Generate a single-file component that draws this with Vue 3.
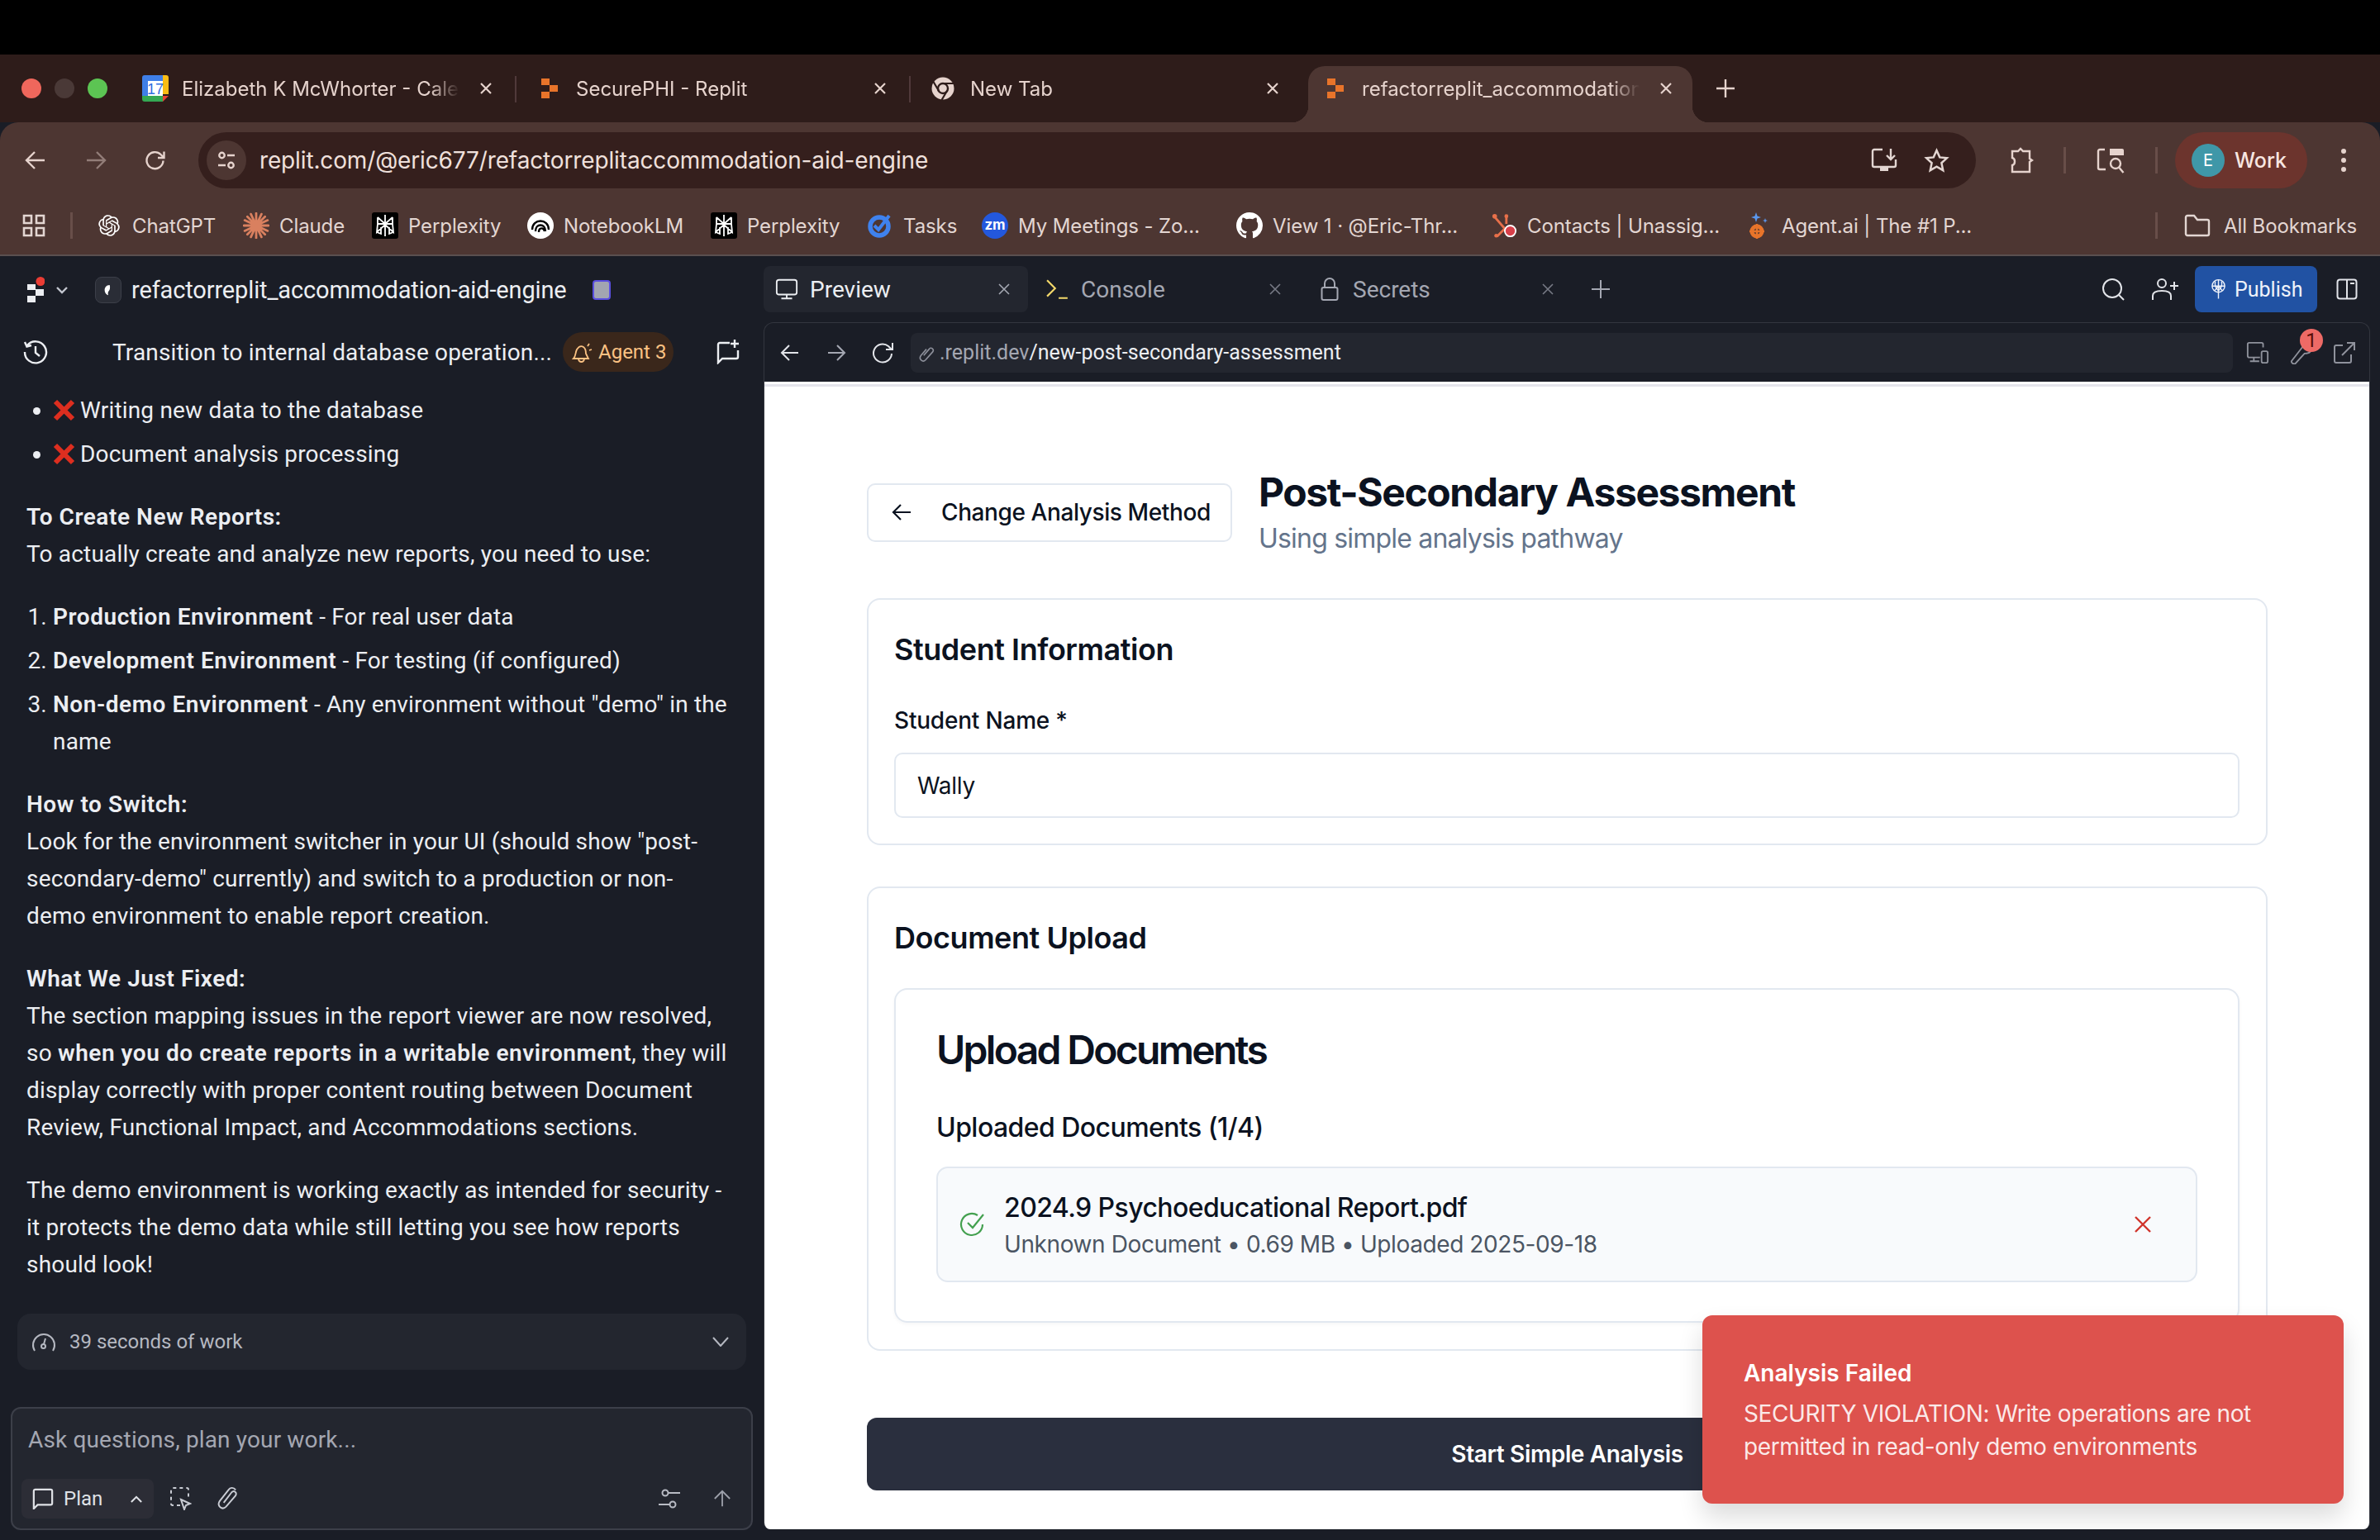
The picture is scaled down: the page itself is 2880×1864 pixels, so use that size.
<script setup>
const bookmarks = [
  { icon: 'gpt', label: 'ChatGPT', w: 178 },
  { icon: 'claude', label: 'Claude', w: 156 },
  { icon: 'perplexity', label: 'Perplexity', w: 188 },
  { icon: 'notebook', label: 'NotebookLM', w: 222 },
  { icon: 'perplexity', label: 'Perplexity', w: 189 },
  { icon: 'tasks', label: 'Tasks', w: 139 },
  { icon: 'zoom', label: 'My Meetings - Zo...', w: 308 },
  { icon: 'github', label: 'View 1 · @Eric-Thr...', w: 308 },
  { icon: 'hubspot', label: 'Contacts | Unassig...', w: 308 },
  { icon: 'agent', label: 'Agent.ai | The #1 P...', w: 496 }
]
</script>

<template>
  <div class="screen">
    <div class="notch"></div>

    <div class="tabstrip">
      <div class="lights">
        <i class="dot red"></i><i class="dot grey"></i><i class="dot green"></i>
      </div>
      <div class="tab">
        <svg class="fav" viewBox="0 0 32 32"><path fill="#fff" d="M7 7h18v18H7z"/><path fill="#3f7fe8" d="M3 0h23v7H7v18H0V3a3 3 0 0 1 3-3z"/><path fill="#f9bc15" d="M25 0h4a3 3 0 0 1 3 3v20h-7z"/><path fill="#34a853" d="M0 25h25v7H3a3 3 0 0 1-3-3z"/><path fill="#ea4335" d="M25 25h7l-7 7z"/><text x="16" y="23" text-anchor="middle" class="cal-num">17</text></svg>
        <span class="tab-title">Elizabeth K McWhorter - Cale</span>
        <svg class="tab-x" viewBox="0 0 16 16"><path d="M2 2l12 12M14 2L2 14"/></svg>
      </div>
      <div class="tab">
        <svg class="fav" viewBox="0 0 32 32"><path fill="#e8742a" d="M6 4h10v8H6zM16 12h10v8H16zM6 20h10v8H6z"/></svg>
        <span class="tab-title">SecurePHI - Replit</span>
        <svg class="tab-x" viewBox="0 0 16 16"><path d="M2 2l12 12M14 2L2 14"/></svg>
      </div>
      <div class="tab last">
        <svg class="fav" viewBox="0 0 32 32"><circle cx="15" cy="16" r="13.5" fill="#e6d3cd"/><circle cx="15" cy="16" r="6" fill="#e6d3cd" stroke="#2e1c1a" stroke-width="2.4"/><path d="M15 10h13M20 19l-6.5 11M10 19L3.5 8" stroke="#2e1c1a" stroke-width="2.2" fill="none"/></svg>
        <span class="tab-title">New Tab</span>
        <svg class="tab-x" viewBox="0 0 16 16"><path d="M2 2l12 12M14 2L2 14"/></svg>
      </div>
      <div class="tab active">
        <svg class="fav" viewBox="0 0 32 32"><path fill="#e8742a" d="M6 4h10v8H6zM16 12h10v8H16zM6 20h10v8H6z"/></svg>
        <span class="tab-title">refactorreplit_accommodation</span>
        <svg class="tab-x" viewBox="0 0 16 16"><path d="M2 2l12 12M14 2L2 14"/></svg>
      </div>
      <svg class="new-tab" viewBox="0 0 22 22"><path d="M11 0v22M0 11h22"/></svg>
    </div>

    <div class="toolbar">
      <svg class="nav-ic back" viewBox="0 0 26 26"><path d="M24 13H2M12 3L2 13l10 10"/></svg>
      <svg class="nav-ic fwd" viewBox="0 0 26 26"><path d="M2 13h22M14 3l10 10-10 10"/></svg>
      <svg class="nav-ic reload" viewBox="0 0 26 26"><path d="M22.5 13.5a10 10 0 1 1-3-7.5l3.5 3.5M23.5 2.5v7.5H16"/></svg>
      <div class="omnibox">
        <div class="site-chip">
          <svg viewBox="0 0 24 24"><circle cx="6.5" cy="6" r="3.2"/><path d="M13 6h9M2 18h9"/><circle cx="17.5" cy="18" r="3.2"/></svg>
        </div>
        <span class="url">replit.com/@eric677/refactorreplitaccommodation-aid-engine</span>
        <svg class="omni-ic install" viewBox="0 0 32 30"><path d="M14 2H4a2 2 0 0 0-2 2v17a2 2 0 0 0 2 2h24a2 2 0 0 0 2-2v-7"/><path d="M24 1v13M19 9l5 5 5-5"/><path class="solid" d="M11 23h10v5H11z"/></svg>
        <svg class="omni-ic star" viewBox="0 0 30 30"><path d="M15 3l3.6 8 8.4.9-6.3 5.8 1.8 8.6-7.5-4.4-7.5 4.4 1.8-8.6L3 11.900l8.400-.9z"/></svg>
      </div>
      <svg class="nav-ic puzzle" viewBox="0 0 32 32"><path d="M6 5h7l3-3 3 3h8v9l3 2-3 2v12H6v-8c4-1 4-8 0-9z"/></svg>
      <i class="bar"></i>
      <svg class="nav-ic lens" viewBox="0 0 36 32"><path d="M11 3H5a2 2 0 0 0-2 2v20a2 2 0 0 0 2 2h7"/><path class="solid" d="M17 2h15a2 2 0 0 1 2 2v6H17z"/><circle cx="24" cy="20" r="6"/><path d="M28.500 25l5 6"/></svg>
      <i class="bar"></i>
      <div class="profile">
        <span class="avatar">E</span>
        <span>Work</span>
      </div>
      <div class="kebab"><i></i><i></i><i></i></div>
    </div>

    <div class="bookmarks">
      <svg class="grid-ic" viewBox="0 0 28 28"><path d="M2 2h9v9H2zM17 2h9v9h-9zM2 17h9v9H2zM17 17h9v9h-9z"/></svg>
      <i class="bm-bar"></i>
      <div v-for="(b, i) in bookmarks" :key="i" class="bm" :style="{ width: b.w + 'px' }">
        <svg v-if="b.icon === 'gpt'" class="bm-ic" viewBox="-3 -3 30 30"><path fill="#fff" d="M22.282 9.821a5.985 5.985 0 0 0-.516-4.91 6.046 6.046 0 0 0-6.51-2.9A6.065 6.065 0 0 0 4.981 4.18a5.985 5.985 0 0 0-3.998 2.9 6.046 6.046 0 0 0 .743 7.097 5.98 5.98 0 0 0 .51 4.911 6.051 6.051 0 0 0 6.515 2.9A5.985 5.985 0 0 0 13.26 24a6.056 6.056 0 0 0 5.772-4.206 5.99 5.99 0 0 0 3.997-2.9 6.056 6.056 0 0 0-.747-7.073zM13.26 22.43a4.476 4.476 0 0 1-2.876-1.04l.141-.081 4.779-2.758a.795.795 0 0 0 .392-.681v-6.737l2.02 1.168a.071.071 0 0 1 .038.052v5.583a4.504 4.504 0 0 1-4.494 4.494zM3.6 18.304a4.47 4.47 0 0 1-.535-3.014l.142.085 4.783 2.759a.771.771 0 0 0 .78 0l5.843-3.369v2.332a.08.08 0 0 1-.033.062L9.74 19.95a4.5 4.5 0 0 1-6.14-1.646zM2.34 7.896a4.485 4.485 0 0 1 2.366-1.973V11.6a.766.766 0 0 0 .388.676l5.815 3.355-2.02 1.168a.076.076 0 0 1-.071 0l-4.83-2.786A4.504 4.504 0 0 1 2.34 7.872zm16.597 3.855l-5.833-3.387L15.119 7.2a.076.076 0 0 1 .071 0l4.83 2.791a4.494 4.494 0 0 1-.676 8.105v-5.678a.79.79 0 0 0-.407-.667zm2.01-3.023l-.141-.085-4.774-2.782a.776.776 0 0 0-.785 0L9.409 9.23V6.897a.066.066 0 0 1 .028-.061l4.83-2.787a4.5 4.5 0 0 1 6.68 4.66zm-12.64 4.135l-2.02-1.164a.08.08 0 0 1-.038-.057V6.075a4.5 4.5 0 0 1 7.375-3.453l-.142.08L8.704 5.460a.795.795 0 0 0-.393.681zm1.097-2.365l2.602-1.5 2.607 1.5v2.999l-2.597 1.5-2.607-1.500z"/></svg>
        <svg v-else-if="b.icon === 'claude'" class="bm-ic" viewBox="0 0 30 30"><path stroke="#d9805f" stroke-width="2.600" stroke-linecap="round" d="M15 1v28M1 15h28M5 5l20 20M25 5L5 25M9 2l12 26M21 2L9 28M2 9l26 12M28 9L2 21"/></svg>
        <svg v-else-if="b.icon === 'perplexity'" class="bm-ic" viewBox="0 0 32 32"><rect width="32" height="32" rx="3" fill="#000"/><path fill="none" stroke="#fff" stroke-width="1.800" d="M16 3v26M7 6l9 8 9-8M7 6v8h18V6M7 14l-1 10 10-9 10 9-1-10M6 24l5 2v-8M26 24l-5 2v-8"/></svg>
        <svg v-else-if="b.icon === 'notebook'" class="bm-ic" viewBox="0 0 32 32"><circle cx="16" cy="16" r="16" fill="#fff"/><path fill="none" stroke="#000" stroke-width="2.400" d="M6 21c0-14 20-14 20 0M10 23c0-10 12-10 12 0M14 24c0-6 6-6 7-1"/></svg>
        <svg v-else-if="b.icon === 'tasks'" class="bm-ic" viewBox="0 0 30 32"><circle cx="14" cy="17" r="11" fill="none" stroke="#3f82ee" stroke-width="5.500"/><path fill="none" stroke="#3f82ee" stroke-width="4" d="M8 16l5 5L26 4"/></svg>
        <svg v-else-if="b.icon === 'zoom'" class="bm-ic" viewBox="0 0 32 32"><rect width="32" height="32" rx="16" fill="#2358dd"/><text x="16" y="21" text-anchor="middle" class="zm">zm</text></svg>
        <svg v-else-if="b.icon === 'github'" class="bm-ic" viewBox="0 0 16 16"><path fill="#fff" d="M8 0C3.58 0 0 3.58 0 8c0 3.540 2.290 6.530 5.470 7.590.4.070.55-.17.55-.38 0-.19-.01-.82-.01-1.490-2.010.37-2.530-.49-2.690-.94-.09-.23-.48-.94-.82-1.130-.28-.15-.68-.52-.01-.53.63-.01 1.080.58 1.230.82.72 1.210 1.870.87 2.330.66.070-.52.28-.87.51-1.070-1.780-.2-3.640-.89-3.640-3.950 0-.87.31-1.590.82-2.150-.08-.2-.36-1.020.08-2.120 0 0 .67-.21 2.200.82.64-.18 1.320-.27 2-.27s1.360.09 2 .27c1.530-1.040 2.200-.82 2.200-.82.44 1.100.16 1.920.08 2.120.51.56.82 1.270.82 2.150 0 3.070-1.870 3.750-3.650 3.950.29.25.54.73.54 1.480 0 1.070-.01 1.930-.01 2.200 0 .21.15.46.55.38A8.013 8.013 0 0 0 16 8c0-4.420-3.580-8-8-8z"/></svg>
        <svg v-else-if="b.icon === 'hubspot'" class="bm-ic" viewBox="0 0 34 32"><path fill="none" stroke="#e8704a" stroke-width="3" d="M5 5l13 15M20 3v11M18 20L8 30"/><circle cx="5" cy="4" r="3" fill="#e8704a"/><circle cx="20" cy="4" r="2.500" fill="#e8704a"/><circle cx="7" cy="29" r="2.500" fill="#e8704a"/><circle cx="25" cy="23" r="7" fill="#d8404a" stroke="#fff" stroke-width="2"/></svg>
        <svg v-else class="bm-ic" viewBox="0 0 24 32"><path fill="#5a97ee" d="M9 0l1.500 4.500L15 6l-4.500 1.500L9 12l-1.500-4.500L3 6l4.500-1.500zM20 7l.8 2.200 2.200.8-2.200.8L20 13l-.8-2.200L17 10l2.200-.8z"/><circle cx="10" cy="23" r="6" fill="none" stroke="#e8742a" stroke-width="5"/><path stroke="#e8742a" stroke-width="2.500" d="M10 14v18M1 23h18"/></svg>
        <span class="bm-label">{{ b.label }}</span>
      </div>
      <i class="bm-bar end"></i>
      <svg class="bm-folder" viewBox="0 0 32 28"><path d="M2 4a2 2 0 0 1 2-2h8l4 5h12a2 2 0 0 1 2 2v15a2 2 0 0 1-2 2H4a2 2 0 0 1-2-2z"/></svg>
      <span class="bm-label">All Bookmarks</span>
    </div>

    <div class="workspace">
      <aside class="agent">
        <div class="project-row">
          <svg class="replit-logo" viewBox="0 0 21 32"><path fill="#eceef2" d="M0 9h10v7H0zM10 15h10v8H10zM0 23h10v8H0z"/><circle cx="16" cy="5.500" r="5.500" fill="#ea3c34"/></svg>
          <svg class="chev" viewBox="0 0 14 10"><path d="M1 2l6 6 6-6"/></svg>
          <span class="project-ic"><svg viewBox="0 0 16 20"><path fill="#fff" d="M10 3C5 3 3 7 3 10c0 4 3 7 5 7-1-3 0-5 1-6s2-4 1-8z"/></svg></span>
          <span class="project-name">refactorreplit_accommodation-aid-engine</span>
          <span class="stop-ic"></span>
        </div>

        <div class="chat-row">
          <svg class="line-ic history" viewBox="0 0 30 30"><path d="M5 7a13 13 0 1 1-3 8M2 3l2.500 5.500L10 7M15 8v8l5 4"/></svg>
          <span class="chat-title">Transition to internal database operation...</span>
          <span class="agent-badge">
            <svg viewBox="0 0 26 26"><path d="M3 21c3-3 2-7 4-11 2-3 5-5 8-3 3 2 3 5 3 8l3 6zM9 22c1 4 6 4 7 0M20 6l2-3M22 11l3-1"/></svg>
            Agent 3
          </span>
          <svg class="line-ic new-chat" viewBox="0 0 28 30"><path d="M16 4H4a2 2 0 0 0-2 2v22l5-5h17a2 2 0 0 0 2-2V13M22 0v10M17 5h10"/></svg>
        </div>

        <div class="thread">
          <ul>
            <li><svg class="cross" viewBox="0 0 27 27"><path d="M3 3l21 21M24 3L3 24"/></svg>Writing new data to the database</li>
            <li><svg class="cross" viewBox="0 0 27 27"><path d="M3 3l21 21M24 3L3 24"/></svg>Document analysis processing</li>
          </ul>
          <p><strong>To Create New Reports:</strong><br>To actually create and analyze new reports, you need to use:</p>
          <ol>
            <li><strong>Production Environment</strong> - For real user data</li>
            <li><strong>Development Environment</strong> - For testing (if configured)</li>
            <li><strong>Non-demo Environment</strong> - Any environment without "demo" in the<br>name</li>
          </ol>
          <p><strong>How to Switch:</strong><br>Look for the environment switcher in your UI (should show "post-<br>secondary-demo" currently) and switch to a production or non-<br>demo environment to enable report creation.</p>
          <p><strong>What We Just Fixed:</strong><br>The section mapping issues in the report viewer are now resolved,<br>so <strong>when you do create reports in a writable environment</strong>, they will<br>display correctly with proper content routing between Document<br>Review, Functional Impact, and Accommodations sections.</p>
          <p>The demo environment is working exactly as intended for security -<br>it protects the demo data while still letting you see how reports<br>should look!</p>
        </div>

        <div class="work-card">
          <svg class="gauge" viewBox="0 0 30 26"><path d="M4 24a13 13 0 1 1 22 0M17 9l-2 7"/><circle cx="14.500" cy="18.500" r="2.500"/></svg>
          <span>39 seconds of work</span>
          <svg class="work-chev" viewBox="0 0 20 12"><path d="M1 1l9 10 9-10"/></svg>
        </div>

        <div class="composer">
          <div class="placeholder">Ask questions, plan your work...</div>
          <div class="composer-tools">
            <div class="plan-btn">
              <svg viewBox="0 0 28 28"><path d="M2 27V4a2 2 0 0 1 2-2h20a2 2 0 0 1 2 2v16a2 2 0 0 1-2 2H7z"/></svg>
              <span>Plan</span>
              <svg class="plan-chev" viewBox="0 0 16 10"><path d="M1 9l7-7 7 7"/></svg>
            </div>
            <svg class="tool select" viewBox="0 0 26 28"><path stroke-dasharray="4 4" d="M12 22H3a2 2 0 0 1-2-2V3a2 2 0 0 1 2-2h17a2 2 0 0 1 2 2v10"/><path d="M13 15l11 5-5 2-2 5z"/></svg>
            <svg class="tool clip" viewBox="0 0 28 30"><path d="M24 4c-3-4-7-3-9 0L4 18c-4 6 3 12 8 7L24 11c2-4-2-7-5-4L9 20"/></svg>
            <span class="spacer"></span>
            <svg class="tool sliders" viewBox="0 0 28 24"><circle cx="9" cy="5" r="3.500"/><path d="M13 5h14M1 19h13"/><circle cx="18" cy="19" r="3.500"/></svg>
            <svg class="tool send" viewBox="0 0 24 22"><path d="M12 21V1M2 11L12 1l10 10"/></svg>
          </div>
        </div>
      </aside>

      <main class="main">
        <div class="main-tabs">
          <div class="m-tab on">
            <svg viewBox="0 0 30 28"><rect x="2" y="2" width="26" height="19" rx="3"/><path d="M15 21v5M8 26h14"/></svg>
            <span>Preview</span>
            <svg class="m-x" viewBox="0 0 14 14"><path d="M1 1l12 12M13 1L1 13"/></svg>
          </div>
          <div class="m-tab">
            <svg viewBox="0 0 26 26"><path class="yel" d="M1 3l9 9-9 9M14 23h10"/></svg>
            <span>Console</span>
            <svg class="m-x" viewBox="0 0 14 14"><path d="M1 1l12 12M13 1L1 13"/></svg>
          </div>
          <div class="m-tab">
            <svg viewBox="0 0 22 28"><rect x="1.500" y="12" width="19" height="15" rx="2"/><path d="M5 12V7a6 6 0 0 1 12 0v5"/></svg>
            <span>Secrets</span>
            <svg class="m-x" viewBox="0 0 14 14"><path d="M1 1l12 12M13 1L1 13"/></svg>
          </div>
          <svg class="m-plus" viewBox="0 0 22 22"><path d="M11 0v22M0 11h22"/></svg>
          <span class="spacer"></span>
          <svg class="top-ic" viewBox="0 0 28 28"><circle cx="13" cy="13" r="11"/><path d="M21 21l6 6"/></svg>
          <svg class="top-ic person" viewBox="0 0 34 28"><circle cx="13" cy="7" r="5"/><path d="M2 27v-5c0-4 4-6 11-6s11 2 11 6v5M28 5v10M23 10h10"/></svg>
          <div class="publish">
            <svg viewBox="0 0 20 26"><circle cx="10" cy="9" r="8"/><path d="M2 9h16M10 1v24M5 15l5-6 5 6M6 3c-1 4 0 8 4 12M14 3c1 4 0 8-4 12"/></svg>
            <span>Publish</span>
          </div>
          <svg class="top-ic panel" viewBox="0 0 26 26"><rect x="1.500" y="1.500" width="23" height="23" rx="3"/><path d="M13 2v22M17 6h5"/></svg>
        </div>

        <section class="frame">
          <div class="frame-bar">
            <svg class="fr-ic" viewBox="0 0 24 24"><path d="M22 12H2M11 3l-9 9 9 9"/></svg>
            <svg class="fr-ic dim" viewBox="0 0 24 24"><path d="M2 12h20M13 3l9 9-9 9"/></svg>
            <svg class="fr-ic" viewBox="0 0 28 28"><path d="M24 15a11 11 0 1 1-4-9l4 4M25 2v8h-8"/></svg>
            <div class="fr-url">
              <svg viewBox="0 0 20 22"><path d="M7 14l6-7c2-3 6 0 4 3l-8 9c-3 3-8-1-5-5l6-7"/></svg>
              <span class="muted">.replit.dev</span><span>/new-post-secondary-assessment</span>
            </div>
            <svg class="fr-tool dev" viewBox="0 0 30 30"><path d="M22 8V4a2 2 0 0 0-2-2H4a2 2 0 0 0-2 2v15a2 2 0 0 0 2 2h14M10 21v5M5 26h12"/><rect x="20" y="13" width="8" height="15" rx="2"/></svg>
            <div class="wrench">
              <svg class="fr-tool" viewBox="0 0 28 30"><path d="M2 26L16 8c1-5 5-7 9-6l-4 5 4 4 3-2c0 5-4 7-9 7L7 29c-3 1-5-1-5-3z"/></svg>
              <span class="err-badge">1</span>
            </div>
            <svg class="fr-tool ext" viewBox="0 0 28 28"><path d="M12 5H4a2 2 0 0 0-2 2v17a2 2 0 0 0 2 2h16a2 2 0 0 0 2-2v-8M11 17L26 2M17 2h9v9"/></svg>
          </div>

          <div class="page">
            <div class="page-rule"></div>
            <div class="page-inner">
              <header class="page-head">
                <button class="ghost-btn">
                  <svg viewBox="0 0 24 22"><path d="M23 11H2M11 2l-9 9 9 9"/></svg>
                  Change Analysis Method
                </button>
                <div>
                  <h1>Post-Secondary Assessment</h1>
                  <p class="sub">Using simple analysis pathway</p>
                </div>
              </header>

              <div class="card first">
                <h2>Student Information</h2>
                <label>Student Name *</label>
                <div class="field">Wally</div>
              </div>

              <div class="card second">
                <h2>Document Upload</h2>
                <div class="upload">
                  <h3>Upload Documents</h3>
                  <h4>Uploaded Documents (1/4)</h4>
                  <div class="file-row">
                    <svg class="file-ok" viewBox="0 0 32 32"><path d="M28 16a13 13 0 1 1-6-11M10 14l6 6L29 4"/></svg>
                    <div class="file-text">
                      <div class="file-name">2024.9 Psychoeducational Report.pdf</div>
                      <div class="file-meta">Unknown Document • 0.69 MB • Uploaded 2025-09-18</div>
                    </div>
                    <svg class="file-x" viewBox="0 0 20 20"><path d="M1 1l18 18M19 1L1 19"/></svg>
                  </div>
                </div>
              </div>

              <button class="start-btn">Start Simple Analysis</button>
            </div>

            <div class="toast">
              <div class="toast-title">Analysis Failed</div>
              <div class="toast-body">SECURITY VIOLATION: Write operations are not<br>permitted in read-only demo environments</div>
            </div>
          </div>
        </section>
      </main>
    </div>
  </div>
</template>

<style>
html, body { background: #000; overflow: hidden; }
</style>

<style scoped>
.screen {
  width: 2880px;
  height: 1864px;
  display: flex;
  flex-direction: column;
  overflow: hidden;
  font-family: Inter, "Liberation Sans", sans-serif;
  background: #1a1d26;
}
svg { fill: none; stroke: currentColor; stroke-width: 2.4; flex: none; display: block; }
.solid { fill: currentColor; stroke: none; }
.spacer { flex: 1; }
.notch { height: 66px; background: #000; flex: none; }

/* browser tabs */
.tabstrip {
  height: 82px;
  flex: none;
  display: flex;
  background: #2e1c1a;
  color: #e6d3cd;
  font-size: 24px;
}
.lights { width: 148px; flex: none; display: flex; gap: 16px; padding: 29px 0 0 26px; box-sizing: border-box; }
.dot { width: 24px; height: 24px; border-radius: 50%; }
.red { background: #ef675c; }
.grey { background: #4a3937; }
.green { background: #5cc453; }
.tab {
  position: relative;
  width: 477px;
  box-sizing: border-box;
  height: 82px;
  flex: none;
  display: flex;
  align-items: center;
  padding: 0 29px 0 24px;
}
.tab::after {
  content: "";
  position: absolute;
  right: 0;
  top: 26px;
  width: 2px;
  height: 32px;
  background: #50393a;
}
.tab.last { width: 481px; padding-right: 35px; }
.tab.last::after { display: none; }
.fav { width: 32px; height: 32px; margin-right: 16px; stroke: none; }
.cal-num { font: 500 18px "Liberation Sans", sans-serif; fill: #2f6fe0; }
.tab-title {
  flex: 1;
  min-width: 0;
  white-space: nowrap;
  -webkit-mask-image: linear-gradient(90deg, #000 300px, transparent 336px);
  mask-image: linear-gradient(90deg, #000 300px, transparent 336px);
}
.tab-x { width: 16px; height: 16px; margin-left: 26px; stroke-width: 2.200; }
.tab.active {
  width: 465px;
  height: 68px;
  margin: 14px 0 0 0;
  padding: 0 24px 14px 17px;
  background: #4d3632;
  border-radius: 20px 20px 0 0;
}
.tab.active .tab-x { margin-left: 18px; }
.tab.active::after,
.tab.active::before {
  content: "";
  position: absolute;
  top: auto;
  bottom: 0;
  width: 20px;
  height: 20px;
  background: radial-gradient(circle at 0 0, transparent 20px, #4d3632 20.500px);
}
.tab.active::before { left: -20px; }
.tab.active::after {
  right: -20px;
  display: block;
  background: radial-gradient(circle at 100% 0, transparent 20px, #4d3632 20.500px);
}
.new-tab { width: 22px; height: 22px; margin: 30px 0 0 29px; stroke-width: 2.400; }

/* browser toolbar */
.toolbar {
  height: 90px;
  flex: none;
  display: flex;
  align-items: center;
  box-sizing: border-box;
  padding: 2px 0 0 30px;
  background: #4d3632;
  border-radius: 22px 22px 0 0;
  color: #e6d3cd;
}
.nav-ic { width: 26px; height: 26px; }
.back { margin-right: 47px; }
.fwd { margin-right: 46px; opacity: 0.45; }
.reload { margin-right: 39px; }
.omnibox {
  width: 2151px;
  flex: none;
  height: 68px;
  box-sizing: border-box;
  display: flex;
  align-items: center;
  padding-left: 10px;
  background: #351f1d;
  border-radius: 34px;
}
.site-chip {
  width: 48px;
  height: 48px;
  border-radius: 50%;
  background: #4d3632;
  display: flex;
  align-items: center;
  justify-content: center;
  margin-right: 16px;
}
.site-chip svg { width: 24px; height: 24px; }
.url { flex: 1; font-size: 28px; letter-spacing: -0.14px; color: #efe0dc; white-space: nowrap; }
.omni-ic.install { width: 32px; height: 30px; margin-right: 32px; color: #e3d6d2; }
.omni-ic.star { width: 31px; height: 31px; margin-right: 32px; color: #e3d6d2; }
.puzzle { width: 32px; height: 32px; margin-left: 38px; }
.bar { width: 3px; height: 32px; background: #684e49; margin: 0 36px; flex: none; }
.lens { width: 36px; height: 32px; }
.profile {
  margin-left: -15px;
  width: 160px;
  height: 68px;
  box-sizing: border-box;
  display: flex;
  align-items: center;
  gap: 12px;
  padding-left: 20px;
  border-radius: 34px;
  background: #6c342d;
  font-size: 25px;
  font-weight: 500;
  color: #f8e6e1;
}
.avatar {
  width: 40px;
  height: 40px;
  border-radius: 50%;
  background: #3f97a8;
  color: #fff;
  font-size: 20px;
  font-weight: 400;
  display: flex;
  align-items: center;
  justify-content: center;
}
.kebab { display: flex; flex-direction: column; gap: 5px; margin-left: 41px; }
.kebab i { width: 6px; height: 6px; border-radius: 50%; background: #e6d3cd; }

/* bookmarks */
.bookmarks {
  height: 72px;
  flex: none;
  box-sizing: border-box;
  display: flex;
  align-items: center;
  padding-left: 27px;
  background: #4d3632;
  border-bottom: 2px solid #5a5050;
  color: #e3d6d2;
  font-size: 24px;
  letter-spacing: -0.1px;
}
.grid-ic { width: 28px; height: 28px; stroke-width: 2.600; }
.bm-bar { width: 3px; height: 32px; background: #684e49; margin: 0 28px 0 30px; flex: none; }
.bm { display: flex; align-items: center; flex: none; }
.bm-ic { width: 32px; height: 32px; margin-right: 12px; stroke: none; }
.bm-ic .zm { font: 700 17px Inter, sans-serif; fill: #fff; }
.bm-label { white-space: nowrap; }
.bm-bar.end { margin: 0 32px 0 0; }
.bm-folder { width: 32px; height: 28px; margin-right: 16px; }

/* workspace */
.workspace { flex: 1; min-height: 0; display: flex; }
.agent {
  width: 924px;
  flex: none;
  display: flex;
  flex-direction: column;
  box-sizing: border-box;
  padding: 0 13px 12px;
  color: #eceef2;
  font-family: Roboto, "Noto Sans", sans-serif;
}
.project-row { height: 81px; flex: none; display: flex; align-items: center; padding-left: 20px; }
.replit-logo { width: 21px; height: 32px; stroke: none; }
.chev { width: 14px; height: 10px; margin: 0 33px 0 14px; color: #c3c6cf; }
.project-ic {
  width: 32px;
  height: 32px;
  box-sizing: border-box;
  border-radius: 8px;
  background: #2a2d36;
  border: 1.500px solid #3c3f49;
  display: flex;
  align-items: center;
  justify-content: center;
  margin-right: 12px;
}
.project-ic svg { width: 14px; height: 18px; stroke: none; }
.project-name { font-size: 29px; letter-spacing: -0.14px; white-space: nowrap; }
.stop-ic {
  width: 22px;
  height: 24px;
  box-sizing: border-box;
  margin-left: 31px;
  border-radius: 4px;
  background: #a2a5b1;
  border: 2px solid #5a4fe0;
}
.chat-row { height: 70px; flex: none; display: flex; align-items: center; padding-left: 15px; }
.history { width: 30px; height: 30px; margin-right: 78px; }
.chat-title { font-size: 28px; letter-spacing: 0.14px; white-space: nowrap; width: 545px; flex: none; }
.agent-badge {
  display: flex;
  align-items: center;
  gap: 7px;
  height: 48px;
  width: 134px;
  box-sizing: border-box;
  padding-left: 10px;
  border-radius: 24px;
  background: #3a271b;
  color: #fbc283;
  font-size: 24px;
  white-space: nowrap;
}
.agent-badge svg { width: 26px; height: 26px; stroke-width: 1.800; }
.new-chat { width: 28px; height: 30px; margin-left: 52px; }
.thread {
  flex: 1;
  min-height: 0;
  overflow: hidden;
  padding: 13px 0 0 19px;
  font-size: 28px;
  line-height: 45px;
  letter-spacing: 0.18px;
  white-space: nowrap;
}
.thread ul, .thread ol { margin: 0; padding-left: 32px; }
.thread ol { margin-top: 31px; }
.thread li + li { margin-top: 8px; }
.thread p { margin: 31px 0 0; }
.thread strong { font-weight: 600; letter-spacing: 0.55px; }
.cross {
  display: inline-block;
  width: 27px;
  height: 27px;
  vertical-align: -4px;
  margin-right: 6px;
  color: #dd2e1f;
  stroke-width: 6;
}
.work-card {
  height: 68px;
  flex: none;
  margin: 0 8px 45px;
  box-sizing: border-box;
  display: flex;
  align-items: center;
  gap: 16px;
  padding-left: 17px;
  border-radius: 16px;
  background: #23262f;
  color: #b5b8c1;
  font-size: 24px;
}
.gauge { width: 30px; height: 26px; stroke-width: 2; }
.work-chev { width: 20px; height: 12px; margin-left: auto; margin-right: 21px; stroke-width: 2; }
.composer {
  height: 149px;
  flex: none;
  box-sizing: border-box;
  background: #23262f;
  border: 2px solid #3c3f49;
  border-radius: 12px;
  display: flex;
  flex-direction: column;
}
.placeholder { padding: 20px 0 0 19px; font-size: 28px; letter-spacing: 0.14px; line-height: 36px; color: #a4a7b2; height: 65px; }
.composer-tools { display: flex; align-items: center; padding: 0 24px 0 11px; color: #dfe1e6; }
.plan-btn {
  width: 160px;
  height: 48px;
  box-sizing: border-box;
  display: flex;
  align-items: center;
  padding-left: 13px;
  border-radius: 8px;
  background: #2c2d36;
  font-size: 24px;
}
.plan-btn svg { width: 26px; height: 26px; margin-right: 12px; }
.plan-btn .plan-chev { width: 14px; height: 9px; margin: 0 0 0 34px; }
.tool { margin-left: 20px; }
.select { width: 26px; height: 28px; color: #c9ccd4; stroke-width: 2; }
.clip { width: 27px; height: 30px; margin-left: 30px; color: #c9ccd4; stroke-width: 2; }
.sliders { width: 28px; height: 24px; color: #b8bbc4; stroke-width: 2; }
.send { width: 22px; height: 22px; margin-left: 39px; color: #9da0aa; stroke-width: 2; }

/* replit right side */
.main { flex: 1; min-width: 0; display: flex; flex-direction: column; padding: 0 12px 13px 0; }
.main-tabs { height: 80px; flex: none; box-sizing: border-box; display: flex; align-items: center; padding-top: 12px; padding-bottom: 12px; }
.m-tab {
  width: 320px;
  height: 56px;
  flex: none;
  box-sizing: border-box;
  display: flex;
  align-items: center;
  gap: 14px;
  padding-left: 14px;
  border-radius: 8px;
  color: #a4a7b2;
  font-family: Roboto, sans-serif;
  font-size: 28px;
}
.m-tab svg:first-child { width: 28px; height: 28px; stroke-width: 2; }
.m-tab .yel { stroke: #f4d96b; }
.m-tab.on { background: #23262f; color: #eceef2; }
.m-tab + .m-tab { margin-left: 8px; }
.m-tab + .m-tab + .m-tab { margin-left: 9px; width: 321px; }
.m-x { width: 14px; height: 14px; margin-left: auto; margin-right: 22px; stroke-width: 1.600; color: #777a85; }
.m-tab.on .m-x { color: #a4a7b2; }
.m-plus { width: 22px; height: 22px; margin-left: 24px; color: #a4a7b2; stroke-width: 2; }
.top-ic { width: 28px; height: 28px; color: #e2e4e9; stroke-width: 2; }
.top-ic.person { width: 34px; height: 28px; margin: 0 19px 0 32px; }
.publish {
  width: 148px;
  height: 56px;
  box-sizing: border-box;
  display: flex;
  align-items: center;
  gap: 10px;
  padding-left: 19px;
  border-radius: 8px;
  background: #2152a3;
  color: #eef2fa;
  font-family: Roboto, sans-serif;
  font-size: 25px;
}
.publish svg { width: 19px; height: 26px; stroke-width: 1.500; }
.top-ic.panel { width: 26px; height: 26px; margin: 0 15px 0 23px; }

.frame {
  flex: 1;
  min-height: 0;
  display: flex;
  flex-direction: column;
  border: 1px solid #33363f;
  border-bottom: 0;
  border-radius: 12px 12px 8px 8px;
  overflow: hidden;
}
.frame-bar { height: 71px; flex: none; display: flex; align-items: center; padding-left: 19px; color: #e2e4e9; }
.fr-ic { width: 24px; height: 24px; margin-right: 32px; stroke-width: 2; }
.fr-ic.dim { color: #a4a7b2; }
.fr-ic:nth-of-type(3) { width: 28px; height: 28px; margin: 0 19px 0 -1px; }
.fr-url {
  width: 1600px;
  height: 48px;
  flex: none;
  box-sizing: border-box;
  display: flex;
  align-items: center;
  padding-left: 8px;
  border-radius: 8px;
  background: #23262f;
  font-family: Roboto, sans-serif;
  font-size: 25px;
  color: #eceef2;
}
.fr-url svg { width: 22px; height: 24px; margin-right: 5px; color: #8c8f9a; stroke-width: 1.500; }
.muted { color: #a4a7b2; }
.fr-tool { width: 28px; height: 28px; color: #8f929c; stroke-width: 2; margin-left: 24px; }
.fr-tool.dev { margin-left: 16px; }
.fr-tool.ext { margin-left: 25px; }
.wrench { position: relative; }
.err-badge {
  position: absolute;
  left: 37px;
  top: -15px;
  width: 28px;
  height: 28px;
  border-radius: 50%;
  background: #ee6a66;
  color: #5a0d0a;
  font: 400 24px/28px Roboto, sans-serif;
  text-align: center;
}

.page { flex: 1; min-height: 0; position: relative; background: #fff; padding-top: 3px; color: #0b1220; }
.page-rule { height: 3px; background: #e5e5ec; }
.page-inner { padding: 96px 123px 0 124px; }
.page-head { display: flex; align-items: center; gap: 32px; }
.ghost-btn {
  height: 71px;
  width: 442px;
  box-sizing: border-box;
  display: flex;
  align-items: center;
  gap: 36px;
  padding: 0 0 0 28px;
  border: 2px solid #e2e8f0;
  border-radius: 10px;
  background: #fff;
  color: #0b1220;
  font: 500 28px Inter, sans-serif;
  letter-spacing: -0.4px;
  white-space: nowrap;
}
.ghost-btn svg { width: 24px; height: 22px; stroke-width: 2.200; }
h1 { margin: 0; font-size: 48px; line-height: 64px; font-weight: 700; letter-spacing: -1.400px; white-space: nowrap; }
.sub { margin: 0; font-size: 32px; line-height: 48px; letter-spacing: -0.8px; color: #64748b; }
.card { border: 2px solid #e2e8f0; border-radius: 16px; box-sizing: border-box; padding: 36px 32px 0 31px; }
.first { height: 299px; margin-top: 48px; }
.second { height: 562px; margin-top: 50px; }
h2 { margin: 0; font-size: 36px; line-height: 48px; font-weight: 600; letter-spacing: -0.45px; }
label { display: block; margin-top: 42px; font-size: 28px; line-height: 40px; font-weight: 500; letter-spacing: -0.2px; }
.field {
  height: 79px;
  box-sizing: border-box;
  margin-top: 19px;
  padding-left: 26px;
  display: flex;
  align-items: center;
  border: 2px solid #e2e8f0;
  border-radius: 10px;
  font-size: 28px;
  letter-spacing: -0.3px;
}
.upload {
  height: 405px;
  box-sizing: border-box;
  margin-top: 37px;
  padding: 41px 49px 0;
  border: 2px solid #e2e8f0;
  border-radius: 16px;
  box-shadow: 0 2px 4px rgba(15, 23, 42, 0.04);
}
h3 { margin: 0; font-size: 48px; line-height: 64px; font-weight: 600; letter-spacing: -2.700px; }
h4 { margin: 38px 0 0; font-size: 32px; line-height: 48px; font-weight: 500; letter-spacing: -0.55px; }
.file-row {
  height: 140px;
  box-sizing: border-box;
  margin-top: 23px;
  padding: 0 54px 0 26px;
  display: flex;
  align-items: center;
  border: 2px solid #e2e8f0;
  border-radius: 14px;
  background: #f8fafc;
}
.file-ok { width: 32px; height: 32px; color: #43a04f; stroke-width: 2.200; margin-right: 22px; }
.file-text { flex: 1; padding-top: 2px; }
.file-name { font-size: 32px; line-height: 44px; font-weight: 500; letter-spacing: -0.58px; }
.file-meta { font-size: 28px; line-height: 40px; letter-spacing: -0.4px; color: #4b5563; margin-top: 2px; }
.file-x { width: 20px; height: 20px; color: #d0342c; stroke-width: 2.400; }
.start-btn {
  width: 100%;
  height: 88px;
  margin-top: 81px;
  border: 0;
  border-radius: 12px;
  background: #2a2f3e;
  color: #fff;
  font: 600 28px Inter, sans-serif;
  letter-spacing: -0.35px;
}
.toast {
  position: absolute;
  right: 31px;
  bottom: 31px;
  width: 776px;
  height: 228px;
  box-sizing: border-box;
  padding: 50px 50px 0;
  border-radius: 12px;
  background: #dd524d;
  color: #fff;
  box-shadow: 0 16px 30px rgba(0, 0, 0, 0.14);
}
.toast-title { font-size: 28px; line-height: 40px; font-weight: 600; }
.toast-body { font-size: 28px; line-height: 40px; letter-spacing: -0.38px; margin-top: 9px; color: rgba(255, 255, 255, 0.9); white-space: nowrap; }
</style>
